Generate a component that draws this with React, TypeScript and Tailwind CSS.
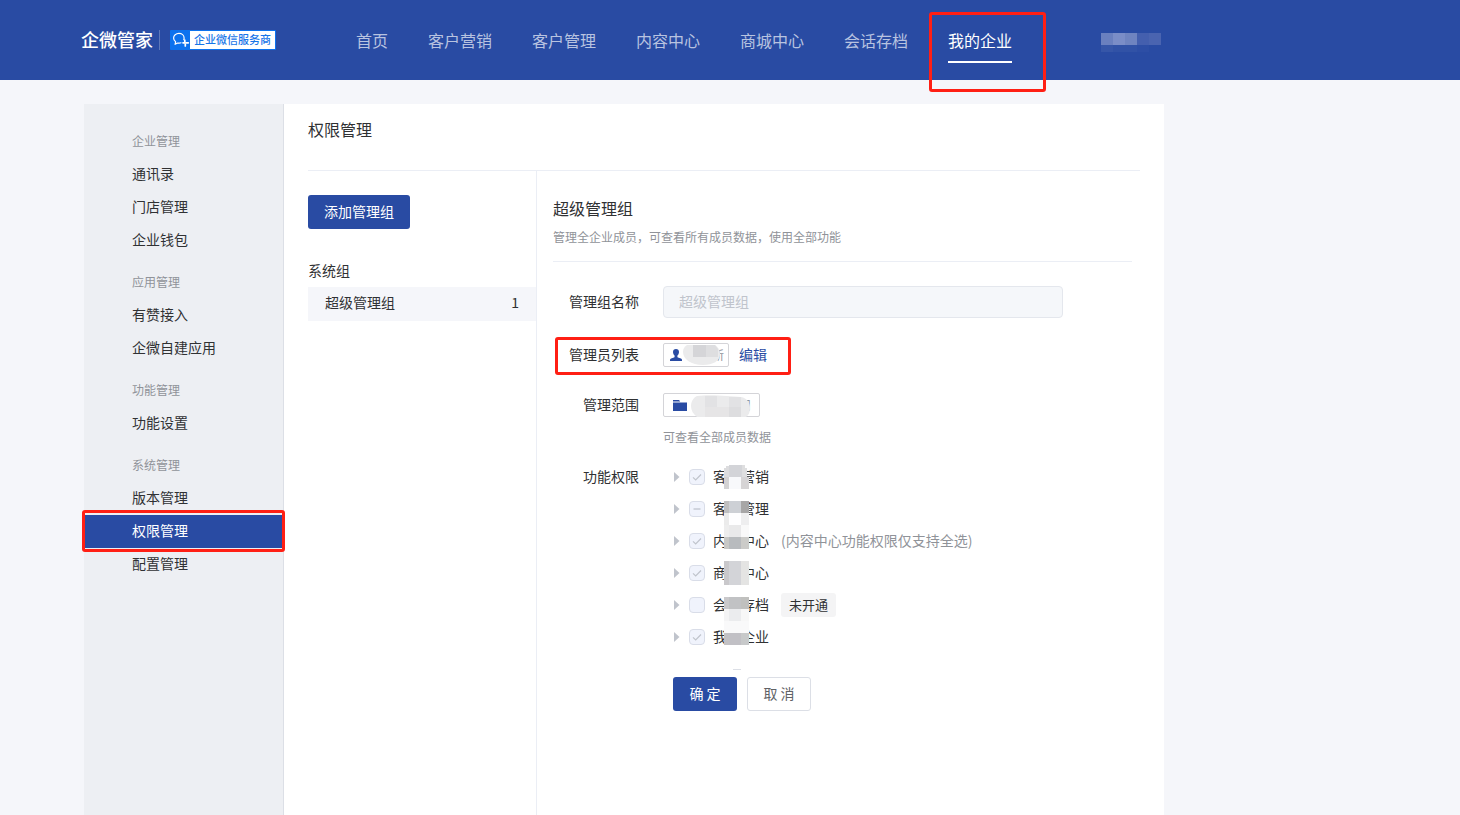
import { Fragment } from "react";

type NavItem = { label: string; active?: boolean };

const navItems: NavItem[] = [
  { label: "首页" },
  { label: "客户营销" },
  { label: "客户管理" },
  { label: "内容中心" },
  { label: "商城中心" },
  { label: "会话存档" },
  { label: "我的企业", active: true },
];

const sideGroups = [
  { title: "企业管理", items: ["通讯录", "门店管理", "企业钱包"] },
  { title: "应用管理", items: ["有赞接入", "企微自建应用"] },
  { title: "功能管理", items: ["功能设置"] },
  { title: "系统管理", items: ["版本管理", "权限管理", "配置管理"] },
];

type CheckState = "checked" | "partial" | "empty";

const permissions: { label: string; state: CheckState; note?: string; tag?: string }[] = [
  { label: "客户营销", state: "checked" },
  { label: "客户管理", state: "partial" },
  { label: "内容中心", state: "checked", note: "(内容中心功能权限仅支持全选)" },
  { label: "商城中心", state: "checked" },
  { label: "会话存档", state: "empty", tag: "未开通" },
  { label: "我的企业", state: "checked" },
];

// x, y, width, height, colour of each mosaic cell over the permission labels
const mosaicCells: [number, number, number, number, string][] = [
  [5, 4, 13, 12, "#d3d4d8"],
  [2, 5, 3, 2, "#dcdcde"],
  [0, 7, 5, 9, "#dcdcde"],
  [18, 4, 3, 3, "#dededf"],
  [18, 7, 5, 9, "#dededf"],
  [0, 16, 5, 12, "#d3d2d3"],
  [5, 16, 12, 12, "#f8f9fb"],
  [17, 16, 8, 12, "#d6d4d5"],
  [0, 40, 5, 12, "#bfbfc0"],
  [5, 40, 12, 12, "#cdd0d5"],
  [17, 40, 8, 12, "#a7a6a6"],
  [0, 52, 5, 12, "#ebebeb"],
  [5, 52, 12, 12, "#fefeff"],
  [17, 52, 8, 12, "#eeeeef"],
  [0, 64, 5, 12, "#ededed"],
  [5, 64, 12, 12, "#e9e9ea"],
  [17, 64, 8, 12, "#f9f9f9"],
  [0, 76, 5, 12, "#c8c8c6"],
  [5, 76, 12, 12, "#b8bbbe"],
  [17, 76, 8, 12, "#cbcbc8"],
  [0, 100, 5, 24, "#c9c8cb"],
  [5, 100, 12, 24, "#d3d4d8"],
  [17, 100, 8, 24, "#e4e4e3"],
  [0, 136, 5, 12, "#cac9cb"],
  [5, 136, 12, 12, "#c1c2c4"],
  [17, 136, 8, 12, "#c0c0be"],
  [0, 148, 5, 12, "#f4f4f5"],
  [5, 148, 12, 12, "#ebecee"],
  [17, 148, 8, 12, "#f7f7f7"],
  [0, 160, 25, 12, "#f9f9fa"],
  [0, 172, 5, 12, "#c2c1c4"],
  [5, 172, 12, 12, "#c1c0c5"],
  [17, 172, 8, 12, "#c7c9ca"],
];

function Highlight({ className }: { className: string }) {
  return (
    <span
      aria-hidden="true"
      className={`pointer-events-none absolute z-20 rounded-[3px] border-3 border-[#ff1f14] ${className}`}
    />
  );
}

function Header() {
  return (
    <header className="flex h-20 items-center bg-[#294ba3] pl-[81px]">
      <div className="flex w-[275px] shrink-0 items-center">
        <span className="pb-0.5 text-[18px] leading-6 font-medium text-white">企微管家</span>
        <span className="ml-1.5 h-5 w-px bg-[#5e78ba]" />
        <span className="ml-2.5 flex h-5 items-center rounded-[1px] bg-[#0d72ee] pr-px">
          <svg width="20" height="20" viewBox="0 0 20 20" fill="none" stroke="#fff">
            <path
              d="M13.800 9.600c.2-.5.3-1 .3-1.600 0-2.600-2.300-4.600-5.200-4.600S3.600 5.500 3.600 8.100c0 1.600.8 2.900 2 3.700l-.5 2.500 2.500-1.300c.5.1.9.2 1.400.2.700 0 1.400-.1 2-.4"
              strokeWidth="1.200"
              strokeLinejoin="round"
              strokeLinecap="round"
            />
            <path
              d="M14.800 10.200v2M13 12.800h1.600M16.300 12.800h2M15.300 14.200v1.800"
              strokeWidth="1.700"
              strokeLinecap="round"
            />
          </svg>
          <span className="flex h-[18px] items-center bg-white px-1 pb-px text-[11px] leading-none font-medium text-[#1775e8]">
            企业微信服务商
          </span>
        </span>
      </div>
      <nav className="flex shrink-0 gap-10 text-base">
        {navItems.map((item) => (
          <a
            key={item.label}
            href="#"
            className={
              item.active
                ? "relative border-b-2 border-white pt-[11px] pb-[9px] leading-6 text-white"
                : "border-b-2 border-transparent pt-[11px] pb-[9px] leading-6 text-[#b8c3e0]"
            }
          >
            {item.label}
            {item.active && <Highlight className="-top-[5px] -right-[34px] -bottom-[31px] -left-[19px]" />}
          </a>
        ))}
      </nav>
      <svg className="mt-1 ml-[89px] shrink-0" width="60" height="20" viewBox="0 0 60 20" shapeRendering="crispEdges">
        <path fill="#6a80bf" d="M0 1h12v12H0z" />
        <path fill="#7a8dc7" d="M12 1h12v12H12z" />
        <path fill="#6f84c0" d="M24 1h12v12H24z" />
        <path fill="#445fae" d="M36 1h12v12H36z" />
        <path fill="#4a64b0" d="M48 1h12v12H48z" />
        <path fill="#3656a8" d="M0 13h12v7H0z" />
        <path fill="#3152a6" d="M12 13h24v7H12z" />
        <path fill="#2d4ea5" d="M36 13h12v7H36z" />
      </svg>
    </header>
  );
}

function Sidebar() {
  return (
    <aside className="w-[200px] shrink-0 border-r border-[#dcdfe6] bg-[#edeff3] pt-3 text-sm text-[#303133]">
      {sideGroups.map((group) => (
        <Fragment key={group.title}>
          <h2 className="pt-4 pb-2 pl-12 text-xs leading-[18px] text-[#909399]">{group.title}</h2>
          <ul>
            {group.items.map((item) => (
              <li key={item} className="relative">
                <a
                  href="#"
                  className={
                    item === "权限管理"
                      ? "block bg-[#294ba3] pb-0.5 pl-12 leading-[31px] text-white"
                      : "block pb-0.5 pl-12 leading-[31px]"
                  }
                >
                  {item}
                </a>
                {item === "权限管理" && <Highlight className="-inset-x-0.5 -top-[5px] -bottom-1" />}
              </li>
            ))}
          </ul>
        </Fragment>
      ))}
    </aside>
  );
}

function GroupList() {
  return (
    <div className="w-[229px] shrink-0 border-r border-[#ebeef5] pt-6 text-sm text-[#303133]">
      <button type="button" className="h-[34px] rounded-[3px] bg-[#294ba3] px-4 pb-0.5 text-white">
        添加管理组
      </button>
      <h2 className="mt-[26px] pb-0.5 leading-[30px]">系统组</h2>
      <a href="#" className="flex justify-between bg-[#f5f6fa] px-[17px] pb-1 leading-[30px]">
        <span>超级管理组</span>
        <span>1</span>
      </a>
    </div>
  );
}

function PermissionTree() {
  return (
    <ul className="relative">
      {permissions.map((p) => (
        <li key={p.label} className="flex h-8 items-center">
          <svg className="ml-2.5" width="8" height="10" viewBox="0 0 8 10" fill="#c0c4cc">
            <path d="M1 0l5.500 5L1 10z" />
          </svg>
          <label className="ml-2 flex items-center gap-2">
            <span className="relative flex">
              <input
                type="checkbox"
                disabled
                defaultChecked={p.state === "checked"}
                ref={(el) => {
                  if (el) el.indeterminate = p.state === "partial";
                }}
                className="size-4 appearance-none rounded-[4px] border border-[#d9dde8] bg-[#f0f3fc]"
              />
              <svg
                className="pointer-events-none absolute inset-0"
                width="16"
                height="16"
                viewBox="0 0 16 16"
                fill="none"
                stroke="#c0c4cc"
              >
                {p.state === "checked" && <path d="M4 8.300l2.700 2.700L12 5.500" strokeWidth="1.200" />}
                {p.state === "partial" && <path d="M4.500 8h7" strokeWidth="2" stroke="#d0d4de" />}
              </svg>
            </span>
            <span className="pb-0.5">{p.label}</span>
          </label>
          {p.note && <span className="ml-3 pb-0.5 text-[#909399]">{p.note}</span>}
          {p.tag && (
            <span className="ml-3 rounded-[3px] bg-[#f4f4f5] px-2 text-[13px] leading-6">{p.tag}</span>
          )}
        </li>
      ))}
      <svg
        aria-hidden="true"
        className="absolute top-0 left-[61px]"
        width="25"
        height="184"
        viewBox="0 0 25 184"
        shapeRendering="crispEdges"
      >
        {mosaicCells.map(([x, y, w, h, fill]) => (
          <rect key={`${x}-${y}`} x={x} y={y} width={w} height={h} fill={fill} />
        ))}
      </svg>
    </ul>
  );
}

function GroupForm() {
  return (
    <section className="min-w-0 flex-1 pt-[25px] pr-2 pl-4 text-sm text-[#303133]">
      <div className="border-b border-[#ebeef5] pb-3.5">
        <h2 className="text-base leading-6">超级管理组</h2>
        <p className="mt-[7px] text-xs leading-5 text-[#909399]">管理全企业成员，可查看所有成员数据，使用全部功能</p>
      </div>

      <form className="mt-6 flex flex-col" onSubmit={(e) => e.preventDefault()}>
        <div className="flex h-8 items-center gap-6">
          <label htmlFor="group-name" className="w-[86px] shrink-0 pb-0.5 text-right">
            管理组名称
          </label>
          <input
            id="group-name"
            disabled
            defaultValue="超级管理组"
            className="h-8 w-full max-w-[400px] rounded-[4px] border border-[#e4e7ed] bg-[#f5f7fa] px-[15px] pb-0.5 text-[#c0c4cc]"
          />
        </div>

        <div className="relative mt-[21px] flex h-8 items-center gap-6">
          <span className="w-[86px] shrink-0 pb-0.5 text-right">管理员列表</span>
          <div className="flex items-center gap-2.5">
            <span className="relative flex h-6 w-[66px] items-center justify-between rounded-[2px] border border-[#d4d4d8] bg-white pr-1 pl-1.5 text-xs text-[#909399]">
              <svg width="12" height="12" viewBox="0 0 12 12" fill="#294ba3">
                <path d="M6 0c1.900 0 3 1.300 3 3.100 0 1.500-.7 2.900-1.600 3.500v1.200c0 .4.200.6.600.8l2.900 1c.7.300 1.100.8 1.100 1.500V12H0v-.9c0-.7.400-1.200 1.100-1.500l2.900-1c.4-.2.600-.4.600-.8V6.600C3.700 6 3 4.600 3 3.100 3 1.300 4.100 0 6 0z" />
              </svg>
              <span>新</span>
              <svg aria-hidden="true" className="absolute top-0 left-[19px]" width="38" height="22" viewBox="0 0 38 22">
                <path fill="#ebebec" d="M4 1h28c3 2 5 5 5 9 0 7-7 11-17 11C8 21 0 15 0 8c0-3 1-5 4-7z" />
                <path fill="#d5d5d8" d="M10 1h13v12H10z" />
                <path fill="#dedee0" d="M23 1h9l3 4v8H23z" />
              </svg>
            </span>
            <a href="#" className="pb-0.5 text-[#294ba3]">
              编辑
            </a>
          </div>
          <Highlight className="-top-0.5 left-0.5 h-[38px] w-[236px]" />
        </div>

        <div className="mt-[18px] flex h-8 items-center gap-6">
          <span className="w-[86px] shrink-0 pb-0.5 text-right">管理范围</span>
          <span className="relative flex h-6 w-[97px] items-center justify-between rounded-[2px] border border-[#d4d4d8] bg-white pr-2 pl-[9px] text-xs text-[#909399]">
            <svg width="14" height="11" viewBox="0 0 14 11" fill="#294ba3">
              <path d="M0 0h6l1.200 1.400H0zM0 2.400h14V11H0z" />
            </svg>
            <span>司</span>
            <svg aria-hidden="true" className="absolute top-px left-[27px]" width="59" height="22" viewBox="0 0 59 22">
              <path fill="#ebebec" d="M6 1C18-1 38 1 50 2c6 1 9 6 9 11 0 4-1 7-4 9H6c-4-3-6-7-6-11S2 3 6 1z" />
              <path fill="#e2e2e4" d="M14 1h12v11H14zM38 2h12v10H38z" />
              <path fill="#e6e5e6" d="M14 12h24v10H14z" />
              <path fill="#dddddf" d="M38 12h12v10H38z" />
            </svg>
          </span>
        </div>
        <p className="mt-1.5 ml-[110px] text-xs leading-5 text-[#909399]">可查看全部成员数据</p>

        <div className="mt-3.5 flex gap-6">
          <span className="w-[86px] shrink-0 text-right leading-[30px]">功能权限</span>
          <PermissionTree />
        </div>

        <div className="mt-4 ml-[120px] flex flex-col items-start">
          <span className="ml-[60px] h-px w-2 bg-[#dcdfe6]" />
          <div className="mt-[7px] flex gap-2.5">
            <button type="submit" className="h-[34px] w-16 rounded-[3px] bg-[#294ba3] pb-0.5 text-white">
              确 定
            </button>
            <button
              type="button"
              className="h-[34px] w-16 rounded-[3px] border border-[#dcdfe6] bg-white pb-0.5 text-[#606266]"
            >
              取 消
            </button>
          </div>
        </div>
      </form>
    </section>
  );
}

export default function App() {
  return (
    <div className="flex min-h-screen flex-col bg-[#f5f6fa] font-['Noto_Sans_CJK_SC',sans-serif]">
      <Header />
      <div className="mt-6 ml-[84px] flex max-w-[1080px] flex-1">
        <Sidebar />
        <main className="flex min-w-0 flex-1 flex-col bg-white px-6">
          <h1 className="h-[67px] border-b border-[#ebeef5] pt-[13px] text-base leading-6 text-[#303133]">权限管理</h1>
          <div className="flex flex-1">
            <GroupList />
            <GroupForm />
          </div>
        </main>
      </div>
    </div>
  );
}
